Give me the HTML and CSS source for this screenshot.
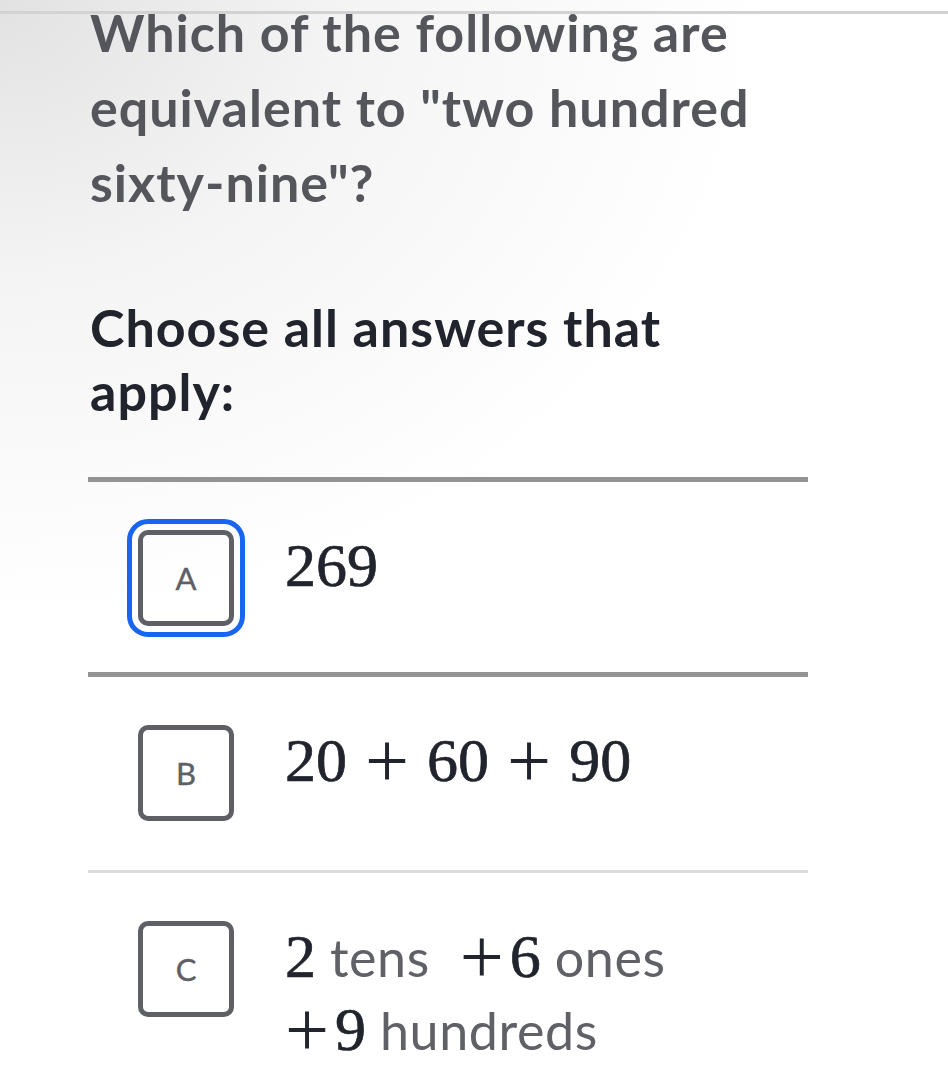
FILE: index.html
```html
<!DOCTYPE html>
<html lang="en">
<head>
    <meta charset="UTF-8">
    <meta name="viewport" content="width=device-width, initial-scale=1.0">
    <title>Exercise</title>
    <link rel="stylesheet" href="styles.css">
</head>
<body>
<div class="header-rule"></div>

<main class="exercise">
    <p class="question">Which of the following are equivalent to "two hundred sixty-nine"?</p>
    <p class="instructions">Choose all answers that apply:</p>

    <ul class="choices">
        <li class="choice focused">
            <span class="choice-letter">A</span>
            <div class="choice-content">
                <span class="math">269</span>
            </div>
        </li>
        <li class="choice">
            <span class="choice-letter">B</span>
            <div class="choice-content">
                <span class="math">20<span class="op">+</span>60<span class="op">+</span>90</span>
            </div>
        </li>
        <li class="choice">
            <span class="choice-letter">C</span>
            <div class="choice-content">
                <span class="math">2</span> tens <span class="math"><span class="op unary">+</span>6</span> ones
                <span class="math"><span class="op unary first">+</span>9</span> hundreds
            </div>
        </li>
    </ul>
</main>
</body>
</html>
```

FILE: styles.css
```css
* {
    box-sizing: border-box;
}

body {
    margin: 0;
    min-height: 100vh;
    overflow: hidden;
    font-family: 'Lato', 'Open Sans', sans-serif;
    background: radial-gradient(ellipse 760px 620px at 0 0, #e2e2e2 0%, #f4f4f4 45%, #fff 100%) no-repeat, #fff;
}

.header-rule {
    position: absolute;
    top: 11px;
    left: 0;
    right: 0;
    height: 3px;
    background: #d2d2d2;
}

.exercise {
    width: 720px;
    margin-left: 88px;
}

.question,
.instructions {
    max-width: 700px;
    padding-left: 2px;
    font-size: 52px;
    font-weight: 700;
    letter-spacing: 1px;
}

.question {
    margin: -5px 0 0;
    line-height: 75px;
    color: #54565b;
}

.instructions {
    margin: 75px 0 0;
    line-height: 64px;
    color: #21242c;
}

.choices {
    list-style: none;
    margin: 54px 0 0;
    padding: 0;
}

.choice {
    display: flex;
    align-items: flex-start;
    gap: 51px;
    padding: 48px 100px 40px 50px;
    border-top: 3px solid #dcdcdc;
}

.choice.focused,
.choice.focused + .choice {
    border-top: 5px solid #939393;
}

.choice.focused {
    padding-bottom: 46px;
}

.choice.focused + .choice {
    padding-bottom: 49px;
}

.choice-letter {
    flex: none;
    width: 96px;
    height: 96px;
    display: flex;
    align-items: center;
    justify-content: center;
    border: 5px solid #5f6066;
    border-radius: 10px;
    font-size: 31px;
    color: #5f6066;
    -webkit-text-stroke: 0.4px #5f6066;
}

.choice.focused .choice-letter {
    outline: 5px solid #1865f2;
    outline-offset: 6px;
}

.choice-content {
    flex: 1;
    font-size: 52px;
    line-height: 73px;
    letter-spacing: 0.6px;
    color: #5f6166;
}

.math {
    font-family: 'Liberation Serif', 'DejaVu Serif', serif;
    font-size: 62px;
    line-height: 60px;
    letter-spacing: 0;
    color: #21242c;
    -webkit-text-stroke: 0.7px #21242c;
}

.op {
    font-size: 1.26em;
    line-height: 0;
    vertical-align: -6px;
    margin: 0 18px;
    -webkit-text-stroke: 0;
}

.op.unary {
    margin: 0 6px 0 16px;
}

.op.unary.first {
    margin-left: 0;
}
```
